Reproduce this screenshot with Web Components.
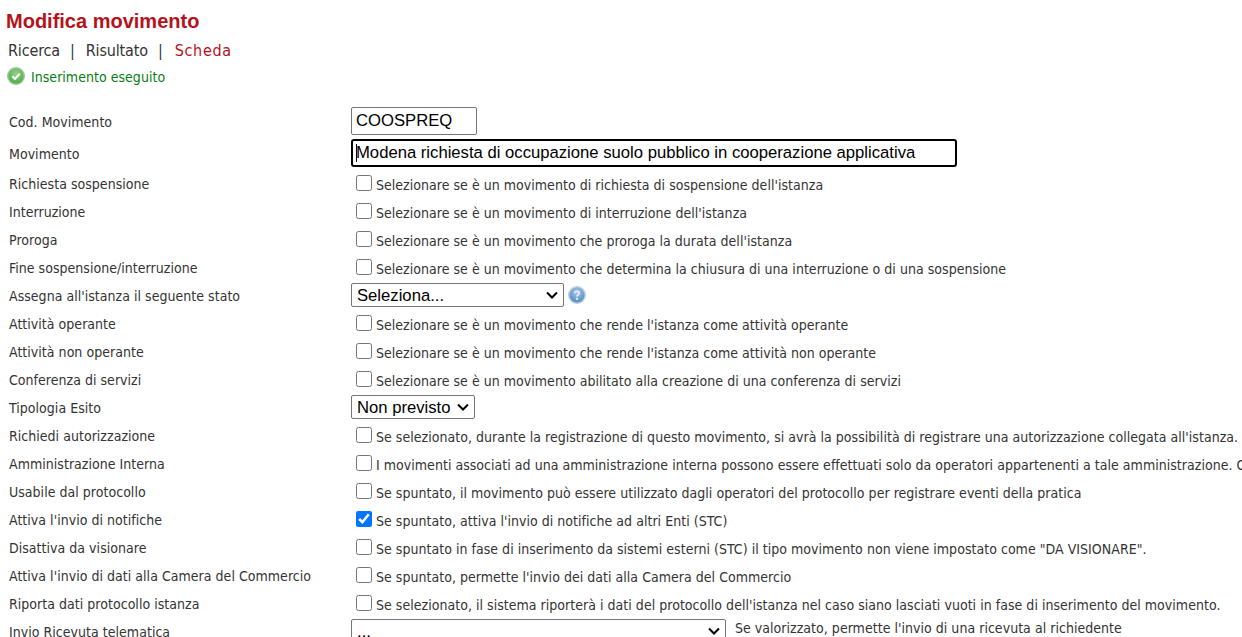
<!DOCTYPE html>
<html lang="it">
<head>
<meta charset="utf-8">
<title>Modifica movimento</title>
<style>
html, body { margin: 0; height: 637px; overflow: hidden; background: #fff; }
body { font-family: "DejaVu Sans Condensed", "DejaVu Sans", sans-serif; font-size: 14px; letter-spacing: .03px; color: #333; }
</style>
</head>
<body>
<testata-pagina titolo="Modifica movimento">
	<a>Ricerca</a>
	<a>Risultato</a>
	<a attiva>Scheda</a>
</testata-pagina>
<esito-ok>Inserimento eseguito</esito-ok>
<div style="height:19px"></div>

<riga-campo alta label="Cod. Movimento"><campo-testo valore="COOSPREQ" larghezza="126"></campo-testo></riga-campo>
<riga-campo alta label="Movimento"><campo-testo focus valore="Modena richiesta di occupazione suolo pubblico in cooperazione applicativa" larghezza="606"></campo-testo></riga-campo>
<riga-campo label="Richiesta sospensione"><campo-spunta>Selezionare se è un movimento di richiesta di sospensione dell'istanza</campo-spunta></riga-campo>
<riga-campo label="Interruzione"><campo-spunta>Selezionare se è un movimento di interruzione dell'istanza</campo-spunta></riga-campo>
<riga-campo label="Proroga"><campo-spunta>Selezionare se è un movimento che proroga la durata dell'istanza</campo-spunta></riga-campo>
<riga-campo label="Fine sospensione/interruzione"><campo-spunta>Selezionare se è un movimento che determina la chiusura di una interruzione o di una sospensione</campo-spunta></riga-campo>
<riga-campo label="Assegna all'istanza il seguente stato"><campo-scelta valore="Seleziona..." larghezza="213"><icona-aiuto></icona-aiuto></campo-scelta></riga-campo>
<riga-campo label="Attività operante"><campo-spunta>Selezionare se è un movimento che rende l'istanza come attività operante</campo-spunta></riga-campo>
<riga-campo label="Attività non operante"><campo-spunta>Selezionare se è un movimento che rende l'istanza come attività non operante</campo-spunta></riga-campo>
<riga-campo label="Conferenza di servizi"><campo-spunta>Selezionare se è un movimento abilitato alla creazione di una conferenza di servizi</campo-spunta></riga-campo>
<riga-campo label="Tipologia Esito"><campo-scelta valore="Non previsto" larghezza="124"></campo-scelta></riga-campo>
<riga-campo label="Richiedi autorizzazione"><campo-spunta>Se selezionato, durante la registrazione di questo movimento, si avrà la possibilità di registrare una autorizzazione collegata all'istanza.</campo-spunta></riga-campo>
<riga-campo label="Amministrazione Interna"><campo-spunta>I movimenti associati ad una amministrazione interna possono essere effettuati solo da operatori appartenenti a tale amministrazione. C</campo-spunta></riga-campo>
<riga-campo label="Usabile dal protocollo"><campo-spunta>Se spuntato, il movimento può essere utilizzato dagli operatori del protocollo per registrare eventi della pratica</campo-spunta></riga-campo>
<riga-campo label="Attiva l'invio di notifiche"><campo-spunta checked>Se spuntato, attiva l'invio di notifiche ad altri Enti (STC)</campo-spunta></riga-campo>
<riga-campo label="Disattiva da visionare"><campo-spunta>Se spuntato in fase di inserimento da sistemi esterni (STC) il tipo movimento non viene impostato come "DA VISIONARE".</campo-spunta></riga-campo>
<riga-campo label="Attiva l'invio di dati alla Camera del Commercio"><campo-spunta>Se spuntato, permette l'invio dei dati alla Camera del Commercio</campo-spunta></riga-campo>
<riga-campo label="Riporta dati protocollo istanza"><campo-spunta>Se selezionato, il sistema riporterà i dati del protocollo dell'istanza nel caso siano lasciati vuoti in fase di inserimento del movimento.</campo-spunta></riga-campo>
<riga-campo label="Invio Ricevuta telematica"><campo-scelta valore="..." larghezza="375"><span style="margin-left:9px;margin-top:-6px">Se valorizzato, permette l'invio di una ricevuta al richiedente</span></campo-scelta></riga-campo>

<script>
class TestataPagina extends HTMLElement {
	constructor () {
		super();
		this.attachShadow({ mode: 'open' });
	}
	connectedCallback() {
		// le voci restano nel light DOM, qui copio solo testo e stato attivo
		const voci = [...this.querySelectorAll('a')].map((a) =>
			`<span class="${a.hasAttribute('attiva') ? 'attiva' : ''}">${a.textContent}</span>`
		).join('<span class="sep">|</span>');
		this.shadowRoot.innerHTML = `
		<style>
		:host { display: block; padding: 0 0 0 6px; }
		h1 {
			margin: 0;
			height: 42px;
			font: bold 20px/42px "Liberation Sans", sans-serif;
			letter-spacing: 0;
			color: #b5121b;
		}
		nav { display: flex; height: 19px; padding-left: 2px; font-size: 16px; line-height: 18px; letter-spacing: -.15px; }
		.sep { margin: 0 11px 0 10px; color: #2b3a55; }
		.attiva { margin-left: 1px; color: #b5121b; letter-spacing: .7px; }
		</style>
		<h1>${this.getAttribute('titolo')}</h1>
		<nav>${voci}</nav>
		`;
	}
}

class EsitoOk extends HTMLElement {
	constructor () {
		super();
		this.attachShadow({ mode: 'open' }).innerHTML = `
		<style>
		:host { display: flex; align-items: center; gap: 6px; height: 20px; margin-top: 5px; padding-left: 7px; color: #0a7d12; }
		svg { width: 18px; height: 18px; flex: none; }
		span { position: relative; top: 1px; }
		</style>
		<svg viewBox="0 0 18 18">
			<defs><radialGradient id="g" cx=".5" cy=".35" r=".7"><stop offset="0" stop-color="#94d484"/><stop offset="1" stop-color="#4aa847"/></radialGradient></defs>
			<circle cx="9" cy="9" r="9" fill="#9cc496"/>
			<circle cx="9" cy="9" r="7.500" fill="url(#g)"/>
			<path d="M5.300 9.200 8 11.800l4.800-5" fill="none" stroke="#fff" stroke-width="2.200"/>
		</svg>
		<span><slot></slot></span>
		`;
	}
}

class RigaCampo extends HTMLElement {
	constructor () {
		super();
		this.attachShadow({ mode: 'open' });
	}
	connectedCallback() {
		this.shadowRoot.innerHTML = `
		<style>
		:host { display: grid; grid-template-columns: 342px 1fr; align-items: center; height: 28px; padding-left: 9px; white-space: nowrap; }
		:host([alta]) { height: 32px; }
		label { padding-top: 2px; }
		div { display: flex; align-items: center; min-width: 0; }
		</style>
		<label>${this.getAttribute('label')}</label>
		<div><slot></slot></div>
		`;
	}
}

class CampoTesto extends HTMLElement {
	constructor () {
		super();
		this.attachShadow({ mode: 'open' });
	}
	connectedCallback() {
		const focus = this.hasAttribute('focus');
		this.shadowRoot.innerHTML = `
		<style>
		:host { display: block; position: relative; }
		input {
			display: block;
			box-sizing: border-box;
			height: 28px;
			padding: 0 4px;
			border: 1px solid #767676;
			border-radius: 2px;
			background: #fff;
			font: 16.67px "Liberation Sans", sans-serif;
			color: #000;
			outline: none;
		}
		.focus { border: 2px solid #000; border-radius: 3px; padding: 0 3px; }
		i { position: absolute; left: 5px; top: 5px; width: 1px; height: 18px; background: #000; }
		</style>
		<input class="${focus ? 'focus' : ''}" value="${this.getAttribute('valore')}" style="width:${this.getAttribute('larghezza')}px">
		${focus ? '<i></i>' : ''}
		`;
	}
}

class CampoSpunta extends HTMLElement {
	constructor () {
		super();
		this.attachShadow({ mode: 'open' });
	}
	connectedCallback() {
		this.shadowRoot.innerHTML = `
		<style>
		:host { display: flex; align-items: center; }
		input { width: 16px; height: 16px; margin: 0 4px 0 5px; flex: none; }
		span { position: relative; top: 2px; }
		</style>
		<input type="checkbox" ${this.hasAttribute('checked') ? 'checked' : ''}>
		<span><slot></slot></span>
		`;
	}
}

class CampoScelta extends HTMLElement {
	constructor () {
		super();
		this.attachShadow({ mode: 'open' });
	}
	connectedCallback() {
		const freccia = `url("data:image/svg+xml,%3Csvg xmlns='http://www.w3.org/2000/svg' width='12' height='8'%3E%3Cpath d='M1 1.500 6 6.500 11 1.500' fill='none' stroke='%23000' stroke-width='2'/%3E%3C/svg%3E")`;
		this.shadowRoot.innerHTML = `
		<style>
		:host { display: flex; align-items: center; }
		select {
			appearance: none;
			box-sizing: border-box;
			height: 24px;
			padding: 0 0 0 5px;
			border: 1px solid #767676;
			border-radius: 2px;
			background: #fff ${freccia} no-repeat right 5px center;
			font: 16.67px "Liberation Sans", sans-serif;
			color: #000;
		}
		</style>
		<select style="width:${this.getAttribute('larghezza')}px"><option>${this.getAttribute('valore')}</option></select>
		<slot></slot>
		`;
	}
}

class IconaAiuto extends HTMLElement {
	constructor () {
		super();
		this.attachShadow({ mode: 'open' }).innerHTML = `
		<style>
		:host { display: block; margin-left: 4px; width: 18px; height: 18px; }
		svg { display: block; width: 18px; height: 18px; }
		</style>
		<svg viewBox="0 0 18 18">
			<defs><radialGradient id="b" cx=".5" cy=".3" r=".75"><stop offset="0" stop-color="#a9c8e8"/><stop offset="1" stop-color="#4f86c0"/></radialGradient></defs>
			<circle cx="9" cy="9" r="9" fill="#bccde0"/>
			<circle cx="9" cy="9" r="7.500" fill="url(#b)"/>
			<path d="M6.800 7.200C6.800 4.700 11.200 4.700 11.200 7.200C11.200 8.800 9 8.700 9 10.500" fill="none" stroke="#e8f0f8" stroke-width="1.700"/>
			<circle cx="9" cy="12.900" r="1.100" fill="#e8f0f8"/>
		</svg>
		`;
	}
}

customElements.define('testata-pagina', TestataPagina);
customElements.define('esito-ok', EsitoOk);
customElements.define('riga-campo', RigaCampo);
customElements.define('campo-testo', CampoTesto);
customElements.define('campo-spunta', CampoSpunta);
customElements.define('campo-scelta', CampoScelta);
customElements.define('icona-aiuto', IconaAiuto);
</script>
</body>
</html>
